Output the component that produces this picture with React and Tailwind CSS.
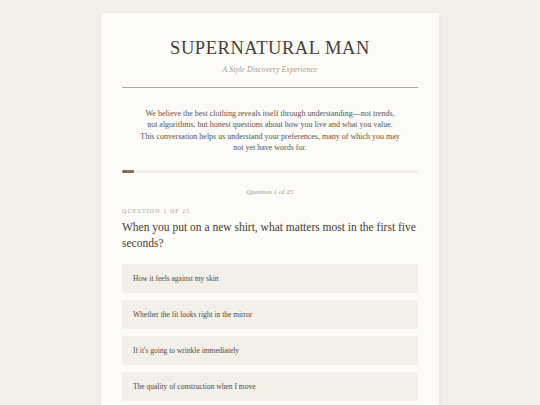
export default function App() {
  const options = [
    "How it feels against my skin",
    "Whether the fit looks right in the mirror",
    "If it's going to wrinkle immediately",
    "The quality of construction when I move",
  ];
  return (
    <div className="h-[405px] overflow-hidden bg-[#f3f0e9] flex justify-center pt-[13px]" style={{ fontFamily: '"Liberation Serif", Georgia, serif' }}>
      <div className="w-[338px] bg-[#fcfbf8] shadow-[0_1px_6px_rgba(0,0,0,0.06)] px-[21px] pt-[24px] h-[420px]">
        <h1 className="text-center text-[18.5px] leading-[22px] tracking-[0.03em] text-[#463f38]">SUPERNATURAL MAN</h1>
        <div className="text-center italic text-[7.5px] leading-[10px] mt-[6px] text-[#9d978e] tracking-[0.03em]">A Style Discovery Experience</div>
        <div className="h-px bg-[#aeaaa2] mt-[12px]"></div>
        <p className="text-center text-[8px] leading-[11.3px] text-[#5a544c] mt-[20px]">
          We believe the best clothing reveals itself through understanding—not trends,<br />not algorithms, but honest questions about how you live and what you value.<br />This conversation helps us understand your preferences, many of which you may<br />not yet have words for.
        </p>
        <div className="h-[3px] bg-[#f1ede7] mt-[17px] rounded-full overflow-hidden">
          <div className="h-full w-[4%] bg-gradient-to-r from-[#6e6a5c] to-[#a5725f]"></div>
        </div>
        <div className="text-center text-[7px] text-[#a29c93] mt-[14px] leading-[10px]">Question 1 of 25</div>
        <div className="text-[6px] tracking-[0.18em] text-[#aaa49b] mt-[10px] leading-[8px]">QUESTION 1 OF 25</div>
        <div className="text-[11.5px] leading-[16px] text-[#433d36] mt-[4px] whitespace-nowrap">When you put on a new shirt, what matters most in the first five<br />seconds?</div>
        <div className="flex flex-col gap-[7px] mt-[13px]">
          {options.map((o) => (
            <div key={o} className="h-[29px] bg-[#f3f0e9] flex items-center px-[11px] text-[7.5px] text-[#4e4841]">{o}</div>
          ))}
        </div>
      </div>
    </div>
  );
}
